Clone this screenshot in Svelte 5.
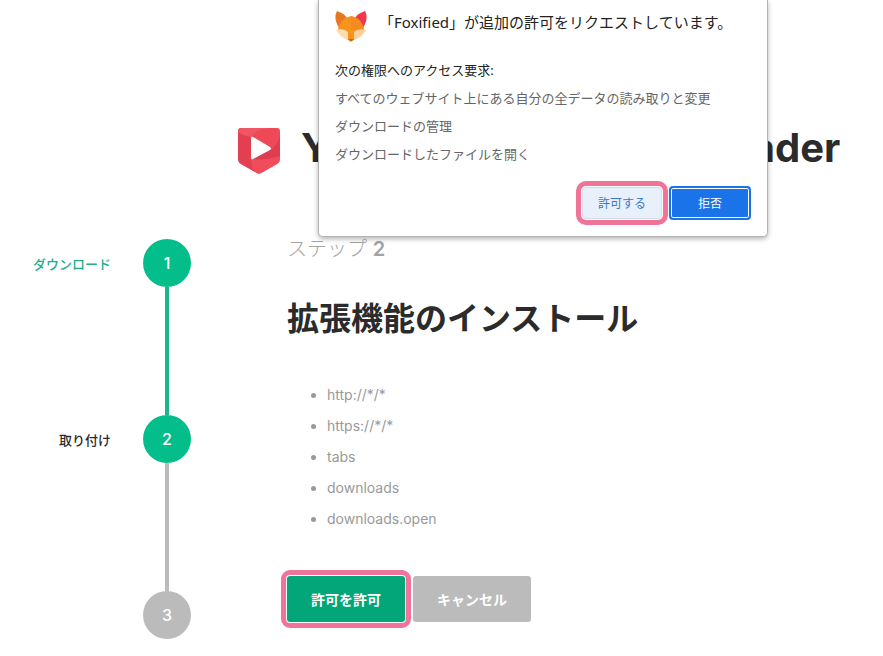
<script lang="ts">
  interface Step {
    number: number
    label: string
    state: 'done' | 'current' | 'pending'
  }

  const steps: Step[] = [
    { number: 1, label: 'ダウンロード', state: 'done' },
    { number: 2, label: '取り付け', state: 'current' },
    { number: 3, label: '', state: 'pending' },
  ]

  const permissions = ['http://*/*', 'https://*/*', 'tabs', 'downloads', 'downloads.open']

  const requests = [
    'すべてのウェブサイト上にある自分の全データの読み取りと変更',
    'ダウンロードの管理',
    'ダウンロードしたファイルを開く',
  ]
</script>

<div class="page">
  <header class="page-header">
    <svg class="logo" viewBox="0 0 44 48" aria-hidden="true">
      <path d="M4 2H40Q43 2 43 5V33Q43 36 40 38L24 47Q22 48.500 20 47L4 38Q1 36 1 33V5Q1 2 4 2Z" fill="#ef4958" />
      <path d="M1 6Q1 2 5 2H35Q19 3 14 11V34L20 47L4 38Q1 36 1 33Z" fill="#e23f50" />
      <path d="M1 5Q3 9 14 11Q19 3 35 2H5Q1 2 1 5Z" fill="#f05562" />
      <path d="M43 9V33Q43 36 40 38L24 47Q22 48 20 47Q13 43 15 32L33 24Q41 19 43 9Z" fill="#f04c5b" />
      <path d="M43 9Q41 20 33 24L15 32Q20 36 43 30Z" fill="#df3d50" />
      <path d="M14 12Q14 10 16 11L33 21Q35 23 33 24L16 33Q14 34 14 32Z" fill="#fff" />
    </svg>
    <h1>YouTube Video Downloader</h1>
  </header>

  <main>
    <ol class="steps">
      {#each steps as step}
        <li class="step {step.state}">
          <span class="step-label">{step.label}</span>
          <span class="step-number">{step.number}</span>
        </li>
      {/each}
    </ol>

    <section class="content">
      <p class="step-title">ステップ <b>2</b></p>
      <h2>拡張機能のインストール</h2>
      <ul class="permissions">
        {#each permissions as permission}
          <li>{permission}</li>
        {/each}
      </ul>
      <div class="actions">
        <button class="btn grant highlight">許可を許可</button>
        <button class="btn cancel">キャンセル</button>
      </div>
    </section>
  </main>

  <div class="prompt" role="dialog" aria-labelledby="prompt-title">
    <div class="prompt-header">
      <svg class="fox" viewBox="0 0 32 32" aria-hidden="true">
        <path d="M2 1Q11 4 12 9L4 18Q-2 8 2 1Z" fill="#e87722" />
        <path d="M30 1Q21 4 20 9L28 18Q34 8 30 1Z" fill="#f0384d" />
        <path d="M16 6L22 8Q28 13 29 20L19 30Q16 32 13 30L3 20Q4 13 10 8Z" fill="#f7941e" />
        <path d="M16 6L22 8Q28 13 29 20L16 20Z" fill="#f58a1f" />
        <path d="M1 20Q9 18 13 22V30Q6 28 1 20Z" fill="#fddcae" />
        <path d="M31 20Q23 18 19 22V30Q26 28 31 20Z" fill="#fbd09a" />
        <path d="M13 29H19L17 31Q16 32 15 31Z" fill="#c96a1b" />
      </svg>
      <h3 id="prompt-title">「Foxified」が追加の許可をリクエストしています。</h3>
    </div>
    <p class="prompt-lead">次の権限へのアクセス要求:</p>
    <ul class="requests">
      {#each requests as request}
        <li>{request}</li>
      {/each}
    </ul>
    <div class="prompt-actions">
      <button class="prompt-btn allow highlight">許可する</button>
      <button class="prompt-btn deny">拒否</button>
    </div>
  </div>
</div>

<style>
  :global(body) {
    background: #fff;
  }

  .page {
    position: relative;
    padding-top: 126px;
    color: #2b2b2b;
    font-family: Inter, 'Noto Sans CJK JP', sans-serif;
  }

  h1,
  h2,
  h3,
  p,
  ul,
  ol {
    margin: 0;
    padding: 0;
  }

  button {
    border: 0;
    padding: 0;
    font-family: inherit;
    cursor: pointer;
  }

  .highlight {
    outline: 5px solid #f0739a;
    outline-offset: 1px;
  }

  /* Header */

  .page-header {
    display: flex;
    gap: 20px;
    padding-left: 237px;
  }

  .logo {
    flex: none;
    width: 44px;
    height: 48px;
  }

  h1 {
    font-size: 40px;
    line-height: 44px;
    font-weight: 700;
    white-space: nowrap;
  }

  main {
    display: flex;
    align-items: flex-start;
    gap: 96px;
    padding-top: 65px;
  }

  /* Steps */

  .steps {
    flex: none;
    width: 191px;
    list-style: none;
  }

  .step {
    position: relative;
    display: flex;
    align-items: center;
    justify-content: flex-end;
    gap: 32px;
    height: 48px;
  }

  .step + .step {
    margin-top: 128px;
  }

  .step + .step::before {
    content: '';
    position: absolute;
    right: 22px;
    bottom: 100%;
    width: 4px;
    height: 128px;
    background: #bbb;
  }

  .step.current::before {
    background: #1fb58c;
  }

  .step-label {
    font-size: 13px;
    font-weight: 500;
  }

  .done .step-label {
    color: #1fae85;
  }

  .step-number {
    display: flex;
    align-items: center;
    justify-content: center;
    width: 48px;
    height: 48px;
    border-radius: 50%;
    background: #03be8b;
    color: #fff;
    font-size: 16px;
    font-weight: 500;
  }

  .pending .step-number {
    background: #bbb;
  }

  /* Content */

  .content {
    display: flex;
    flex: 1;
    flex-direction: column;
    gap: 36px;
  }

  .step-title {
    color: #a3a3a3;
    font-size: 20px;
    line-height: 20px;
    font-weight: 300;
  }

  .step-title b {
    font-weight: 600;
  }

  h2 {
    font-size: 32px;
    line-height: 48px;
    font-weight: 700;
  }

  .permissions {
    padding-left: 40px;
    color: #999;
    font-size: 14px;
    line-height: 31px;
  }

  .actions {
    display: flex;
    gap: 8px;
    padding-top: 6px;
  }

  .btn {
    width: 118px;
    height: 46px;
    border-radius: 3px;
    color: #fff;
    font-size: 14px;
    font-weight: 700;
  }

  .grant {
    background: #03a678;
  }

  .cancel {
    background: #bbb;
  }

  /* Permission prompt */

  .prompt {
    position: absolute;
    top: 0;
    left: 318px;
    box-sizing: border-box;
    width: 450px;
    padding: 8px 16px 16px;
    border: 1px solid #b4b4b4;
    border-top: 0;
    border-radius: 0 0 5px 5px;
    background: #fff;
    box-shadow: 0 2px 5px rgba(0, 0, 0, 0.3);
    color: #666;
    font-family: 'Noto Sans', 'Noto Sans CJK JP', sans-serif;
    font-size: 13px;
    line-height: 28px;
  }

  .prompt-header {
    display: flex;
    gap: 12px;
    margin-bottom: 12px;
  }

  .fox {
    flex: none;
    width: 32px;
    height: 36px;
  }

  h3 {
    color: #222;
    font-size: 15px;
    font-weight: 400;
    white-space: nowrap;
  }

  .prompt-lead {
    color: #222;
  }

  .requests {
    list-style: none;
  }

  .prompt-actions {
    display: flex;
    align-items: center;
    justify-content: flex-end;
    gap: 7px;
    margin-top: 18px;
  }

  .prompt-btn {
    box-sizing: border-box;
    border-radius: 4px;
    font-size: 12px;
  }

  .allow {
    width: 80px;
    height: 32px;
    border: 1px solid #d5dce6;
    background: #e8f1fb;
    color: #3878c7;
  }

  .deny {
    width: 82px;
    height: 34px;
    border: 2px solid #1a73e8;
    background: #1a73e8;
    box-shadow: inset 0 0 0 1px #fff;
    color: #fff;
  }
</style>
